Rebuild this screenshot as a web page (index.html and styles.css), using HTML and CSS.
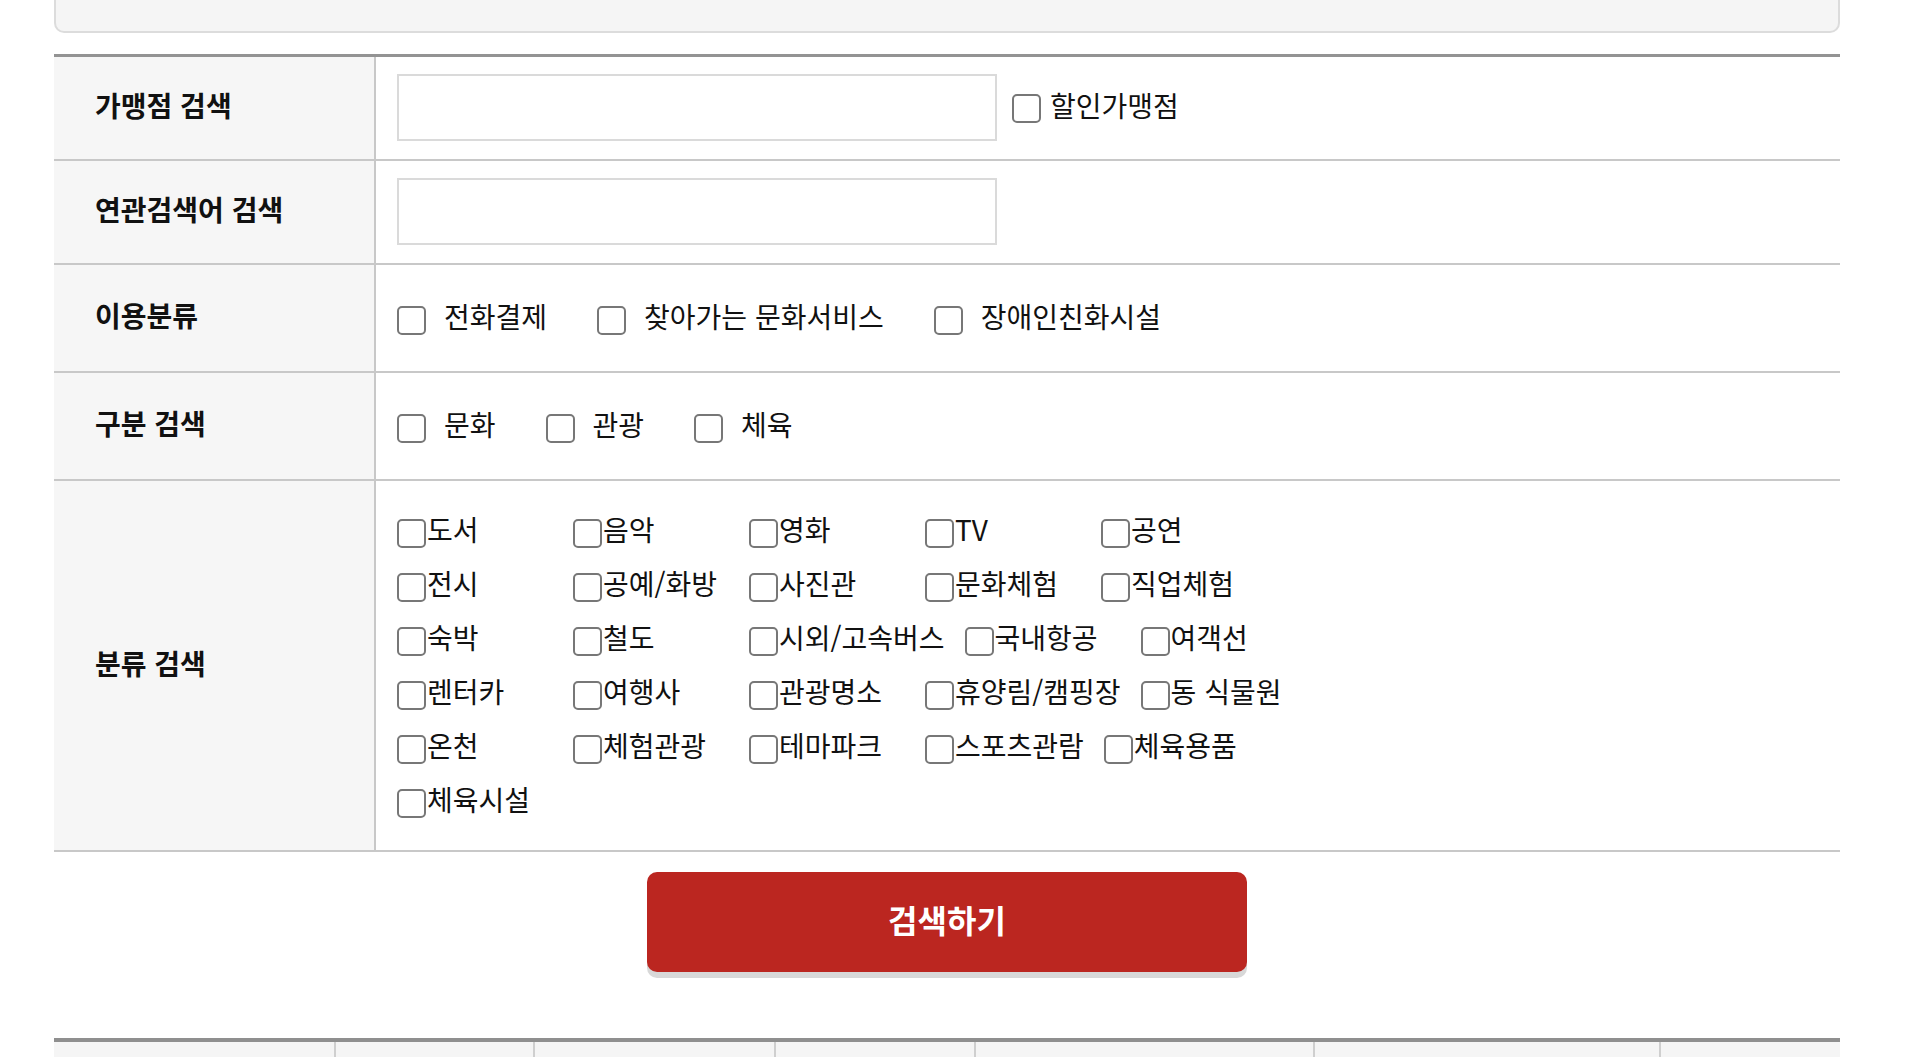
FILE: index.html
```html
<!DOCTYPE html>
<html lang="ko">
<head>
  <meta charset="UTF-8">
  <meta name="viewport" content="width=device-width, initial-scale=1.0">
  <title>가맹점 검색</title>
  <link rel="stylesheet" href="styles.css">
</head>
<body>
  <div class="wrap">
    <div class="top-box"></div>

    <div class="search-table">
      <div class="row">
        <div class="th">가맹점 검색</div>
        <div class="td td-input">
          <input type="text" class="txt">
          <label class="chk-inline"><input type="checkbox" class="chk">할인가맹점</label>
        </div>
      </div>
      <div class="row">
        <div class="th">연관검색어 검색</div>
        <div class="td td-input">
          <input type="text" class="txt">
        </div>
      </div>
      <div class="row row-check">
        <div class="th">이용분류</div>
        <div class="td">
          <label class="opt"><input type="checkbox" class="chk"><span>전화결제</span></label>
          <label class="opt"><input type="checkbox" class="chk"><span>찾아가는 문화서비스</span></label>
          <label class="opt"><input type="checkbox" class="chk"><span>장애인친화시설</span></label>
        </div>
      </div>
      <div class="row row-check">
        <div class="th">구분 검색</div>
        <div class="td">
          <label class="opt"><input type="checkbox" class="chk"><span>문화</span></label>
          <label class="opt"><input type="checkbox" class="chk"><span>관광</span></label>
          <label class="opt"><input type="checkbox" class="chk"><span>체육</span></label>
        </div>
      </div>
      <div class="row">
        <div class="th">분류 검색</div>
        <div class="td td-cat">
          <div class="cat-line">
            <label class="cat"><input type="checkbox" class="chk">도서</label>
            <label class="cat"><input type="checkbox" class="chk">음악</label>
            <label class="cat"><input type="checkbox" class="chk">영화</label>
            <label class="cat"><input type="checkbox" class="chk">TV</label>
            <label class="cat"><input type="checkbox" class="chk">공연</label>
          </div>
          <div class="cat-line">
            <label class="cat"><input type="checkbox" class="chk">전시</label>
            <label class="cat"><input type="checkbox" class="chk">공예/화방</label>
            <label class="cat"><input type="checkbox" class="chk">사진관</label>
            <label class="cat"><input type="checkbox" class="chk">문화체험</label>
            <label class="cat"><input type="checkbox" class="chk">직업체험</label>
          </div>
          <div class="cat-line">
            <label class="cat"><input type="checkbox" class="chk">숙박</label>
            <label class="cat"><input type="checkbox" class="chk">철도</label>
            <label class="cat"><input type="checkbox" class="chk">시외/고속버스</label>
            <label class="cat"><input type="checkbox" class="chk">국내항공</label>
            <label class="cat"><input type="checkbox" class="chk">여객선</label>
          </div>
          <div class="cat-line">
            <label class="cat"><input type="checkbox" class="chk">렌터카</label>
            <label class="cat"><input type="checkbox" class="chk">여행사</label>
            <label class="cat"><input type="checkbox" class="chk">관광명소</label>
            <label class="cat"><input type="checkbox" class="chk">휴양림/캠핑장</label>
            <label class="cat"><input type="checkbox" class="chk">동 식물원</label>
          </div>
          <div class="cat-line">
            <label class="cat"><input type="checkbox" class="chk">온천</label>
            <label class="cat"><input type="checkbox" class="chk">체험관광</label>
            <label class="cat"><input type="checkbox" class="chk">테마파크</label>
            <label class="cat"><input type="checkbox" class="chk">스포츠관람</label>
            <label class="cat"><input type="checkbox" class="chk">체육용품</label>
          </div>
          <div class="cat-line">
            <label class="cat"><input type="checkbox" class="chk">체육시설</label>
          </div>
        </div>
      </div>
    </div>

    <div class="btn-area">
      <button type="button" class="btn-search">검색하기</button>
    </div>

    <div class="result-table">
      <div class="cell c1"></div>
      <div class="cell c2"></div>
      <div class="cell c3"></div>
      <div class="cell c4"></div>
      <div class="cell c5"></div>
      <div class="cell c6"></div>
      <div class="cell c7"></div>
    </div>
  </div>
</body>
</html>
```

FILE: styles.css
```css
body {
  margin: 0;
  padding: 0;
  background-color: #fff;
  color: #111;
  font-family: "Noto Sans CJK KR", "Noto Sans", sans-serif;
  font-size: 28px;
}
.wrap {
  width: 1786px;
  margin-left: 54px;
}
.top-box {
  height: 31px;
  background-color: #f5f5f5;
  border: 2px solid #dcdcdc;
  border-top: none;
  border-radius: 0 0 10px 10px;
}
.search-table {
  margin-top: 21px;
  border-top: 3px solid #939393;
}
.row {
  display: grid;
  grid-template-columns: 322px 1fr;
  border-bottom: 2px solid #c8c8c8;
}
.th {
  display: flex;
  align-items: center;
  padding: 0 0 6px 41px;
  background-color: #f6f6f6;
  border-right: 2px solid #c8c8c8;
  font-size: 28px;
  font-weight: bold;
}
.td {
  display: flex;
  align-items: center;
  padding: 0 21px 4px;
}
.td-input {
  padding: 17px 21px 18px;
}
.row-check .td {
  height: 102px;
}
.txt {
  box-sizing: border-box;
  width: 600px;
  height: 67px;
  margin: 0;
  border: 2px solid #dadada;
  background-color: #fff;
}
.chk {
  appearance: none;
  -webkit-appearance: none;
  box-sizing: border-box;
  width: 29px;
  height: 29px;
  margin: 8px 0 0;
  border: 2px solid #777;
  border-radius: 5px;
  background-color: #fff;
  flex-shrink: 0;
}
.chk-inline {
  display: flex;
  align-items: center;
  margin: 0 0 6px 15px;
  gap: 9px;
}
.opt {
  display: flex;
  align-items: center;
  gap: 18px;
  margin-right: 50px;
}
.td-cat {
  display: block;
  padding: 21px 21px 24px;
}
.cat-line {
  display: flex;
  align-items: center;
  height: 54px;
}
.cat {
  display: flex;
  align-items: center;
  gap: 1px;
  min-width: 156px;
  margin-right: 20px;
}
.btn-area {
  padding-top: 20px;
  text-align: center;
}
.btn-search {
  width: 600px;
  height: 100px;
  padding: 0 0 6px;
  border: none;
  border-radius: 10px;
  background-color: #bb2620;
  box-shadow: 0 6px 0 #d8d8d8;
  color: #fff;
  font-family: "Noto Sans CJK KR", sans-serif;
  font-size: 32px;
  font-weight: bold;
  cursor: pointer;
}
.result-table {
  display: grid;
  grid-template-columns: 280px 199px 241px 200px 339px 346px 1fr;
  margin-top: 66px;
  border-top: 4px solid #8f8f8f;
}
.cell {
  height: 60px;
  background-color: #f5f5f5;
  border-left: 2px solid #cfcfcf;
}
.c1 {
  border-left: none;
}
```
